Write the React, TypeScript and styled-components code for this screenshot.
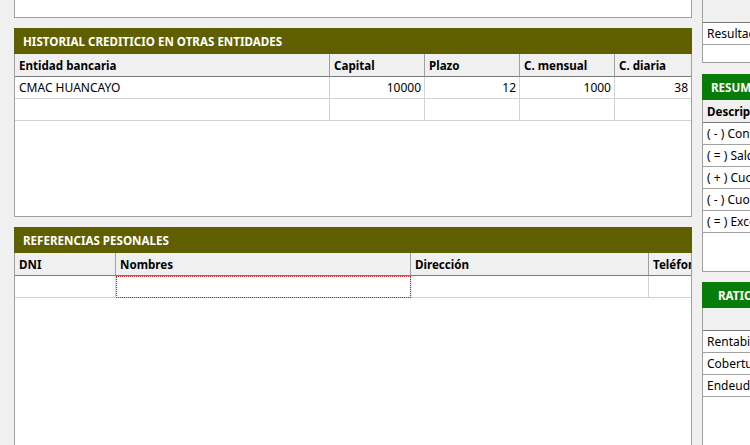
import styled, { createGlobalStyle, css } from 'styled-components'

const GlobalStyle = createGlobalStyle`
  html, body {
    margin: 0;
    padding: 0;
    background: #f0f0f0;
    overflow: hidden;
  }
  body {
    font-family: "Noto Sans", "Open Sans", Arial, sans-serif;
    font-size: 12px;
    color: #000000;
  }
  * {
    box-sizing: border-box;
  }
`

const Page = styled.div`
  display: grid;
  grid-template-columns: 678px 1fr;
  column-gap: 10px;
  padding-left: 14px;
  width: 750px;
  height: 445px;
  overflow: hidden;
`

const LeftColumn = styled.div`
  display: flex;
  flex-direction: column;
  gap: 10px;
  min-width: 0;
`

const TopStub = styled.div`
  height: 18px;
  flex: none;
  background: #ffffff;
  border: 1px solid #a0a0a0;
  border-top: 0;
`

const Section = styled.section<{ $height: number }>`
  display: flex;
  flex-direction: column;
  height: ${({ $height }) => $height}px;
  flex: none;
`

const SectionTitle = styled.div<{ $color?: string; $indent?: number }>`
  height: 26px;
  flex: none;
  display: flex;
  align-items: center;
  padding-left: ${({ $indent }) => $indent ?? 9}px;
  background: ${({ $color }) => $color ?? '#5f5f00'};
  color: #ffffff;
  font-weight: 700;
  font-size: 11.6px;
  white-space: nowrap;
  overflow: hidden;
`

const SectionBody = styled.div`
  flex: 1;
  background: #ffffff;
  border: 1px solid #a0a0a0;
  border-top: 0;
  overflow: hidden;
`

const Grid = styled.table`
  border-collapse: separate;
  border-spacing: 0;
  table-layout: fixed;
  width: max-content;
`

const HeadCell = styled.th<{ $w: number }>`
  width: ${({ $w }) => $w}px;
  height: 23px;
  padding: 0 4px;
  background: #f0f0f0;
  border-right: 1px solid #a0a0a0;
  border-bottom: 1px solid #7a7a7a;
  text-align: left;
  font-weight: 700;
  font-size: 11.6px;
  white-space: nowrap;
  overflow: hidden;
`

const Cell = styled.td<{ $num?: boolean; $focus?: boolean }>`
  height: 22px;
  padding: 0 ${({ $num }) => ($num ? '3px' : '4px')};
  border-right: 1px solid #d2d2d2;
  border-bottom: 1px solid #d2d2d2;
  text-align: ${({ $num }) => ($num ? 'right' : 'left')};
  white-space: nowrap;
  overflow: hidden;
  ${({ $focus }) =>
    $focus &&
    css`
      outline: 1px dotted #c0262a;
      outline-offset: -1px;
    `}
`

const RightColumn = styled.div`
  min-width: 0;
  overflow: hidden;
`

const SideStack = styled.div`
  width: 220px;
  display: flex;
  flex-direction: column;
`

const SideBox = styled.div<{ $height?: number }>`
  background: #ffffff;
  border-left: 1px solid #a0a0a0;
  border-bottom: 1px solid #a0a0a0;
  ${({ $height }) =>
    $height
      ? css`
          height: ${$height}px;
          flex: none;
        `
      : css`
          flex: 1;
        `}
`

const SideSpacer = styled.div<{ $h: number }>`
  height: ${({ $h }) => $h}px;
  flex: none;
`

const SideHead = styled.div`
  height: 23px;
  padding: 0 4px;
  display: flex;
  align-items: center;
  background: #f0f0f0;
  border-bottom: 1px solid #7a7a7a;
  font-weight: 700;
  font-size: 11.6px;
  white-space: nowrap;
`

const SideRow = styled.div`
  height: 22px;
  padding: 0 4px;
  display: flex;
  align-items: center;
  border-bottom: 1px solid #a0a0a0;
  white-space: nowrap;
`

const creditos = [
  { entidad: 'CMAC HUANCAYO', capital: '10000', plazo: '12', mensual: '1000', diaria: '38' },
  { entidad: '', capital: '', plazo: '', mensual: '', diaria: '' },
]

const resumen = [
  '( - ) Consumo familiar',
  '( = ) Saldo disponible',
  '( + ) Cuotas otras entidades',
  '( - ) Cuota propuesta',
  '( = ) Excedente',
]

const ratios = ['Rentabilidad', 'Cobertura', 'Endeudamiento']

export default function App() {
  return (
    <>
      <GlobalStyle />
      <Page>
        <LeftColumn>
          <TopStub />

          <Section $height={189}>
            <SectionTitle>HISTORIAL CREDITICIO EN OTRAS ENTIDADES</SectionTitle>
            <SectionBody>
              <Grid>
                <thead>
                  <tr>
                    <HeadCell $w={315}>Entidad bancaria</HeadCell>
                    <HeadCell $w={95}>Capital</HeadCell>
                    <HeadCell $w={95}>Plazo</HeadCell>
                    <HeadCell $w={95}>C. mensual</HeadCell>
                    <HeadCell $w={77}>C. diaria</HeadCell>
                  </tr>
                </thead>
                <tbody>
                  {creditos.map((c, i) => (
                    <tr key={i}>
                      <Cell>{c.entidad}</Cell>
                      <Cell $num>{c.capital}</Cell>
                      <Cell $num>{c.plazo}</Cell>
                      <Cell $num>{c.mensual}</Cell>
                      <Cell $num>{c.diaria}</Cell>
                    </tr>
                  ))}
                </tbody>
              </Grid>
            </SectionBody>
          </Section>

          <Section $height={250}>
            <SectionTitle>REFERENCIAS PESONALES</SectionTitle>
            <SectionBody>
              <Grid>
                <thead>
                  <tr>
                    <HeadCell $w={101}>DNI</HeadCell>
                    <HeadCell $w={295}>Nombres</HeadCell>
                    <HeadCell $w={238}>Dirección</HeadCell>
                    <HeadCell $w={110}>Teléfono</HeadCell>
                  </tr>
                </thead>
                <tbody>
                  <tr>
                    <Cell />
                    <Cell $focus />
                    <Cell />
                    <Cell />
                  </tr>
                </tbody>
              </Grid>
            </SectionBody>
          </Section>
        </LeftColumn>

        <RightColumn>
          <SideStack>
            <SideBox $height={63}>
              <SideHead />
              <SideRow>Resultado</SideRow>
            </SideBox>

            <SideSpacer $h={11} />

            <Section $height={198}>
              <SectionTitle $color="#087c08">RESUMEN DE FLUJO</SectionTitle>
              <SideBox>
                <SideHead>Descripción</SideHead>
                {resumen.map((r) => (
                  <SideRow key={r}>{r}</SideRow>
                ))}
              </SideBox>
            </Section>

            <SideSpacer $h={10} />

            <Section $height={200}>
              <SectionTitle $color="#087c08" $indent={16}>
                RATIOS FINANCIEROS
              </SectionTitle>
              <SideBox>
                <SideHead />
                {ratios.map((r) => (
                  <SideRow key={r}>{r}</SideRow>
                ))}
              </SideBox>
            </Section>
          </SideStack>
        </RightColumn>
      </Page>
    </>
  )
}
